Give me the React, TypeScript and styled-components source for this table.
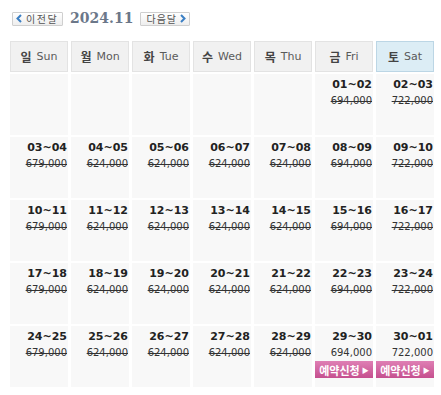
import React from 'react';
import styled, { createGlobalStyle } from 'styled-components';

const GlobalStyle = createGlobalStyle`
  body {
    margin: 0;
    background: #ffffff;
    font-family: 'DejaVu Sans', 'Noto Sans CJK KR', sans-serif;
  }
`;

const Page = styled.div`
  padding: 12px 0 0 10px;
  width: 424px;
`;

const Nav = styled.div`
  display: flex;
  align-items: center;
  height: 13px;
  padding-left: 2px;
`;

const NavButton = styled.button`
  display: flex;
  flex-shrink: 0;
  align-items: center;
  gap: 4px;
  height: 14px;
  padding: 0 4px 0 3px;
  border: 1px solid #cfcfcf;
  border-radius: 1px;
  background: linear-gradient(#ffffff, #eeeeee);
  color: #555;
  font-family: 'Noto Sans CJK KR', sans-serif;
  font-size: 10px;
  letter-spacing: 1.5px;
  line-height: 12px;
  white-space: nowrap;
  cursor: pointer;
`;

const NextButton = styled(NavButton)`
  padding: 0 3px 0 5px;
  gap: 3px;
  letter-spacing: 1px;
`;

const MonthTitle = styled.span`
  margin: 0 7px 0 7px;
  font-family: 'DejaVu Serif', serif;
  font-weight: bold;
  font-size: 14px;
  line-height: 13px;
  color: #6b7789;
  white-space: nowrap;
`;

const Grid = styled.div`
  display: grid;
  grid-template-columns: repeat(7, 1fr);
  grid-template-rows: 31px repeat(5, 61px);
  column-gap: 3px;
  row-gap: 2px;
  margin-top: 16px;
`;

const HeadCell = styled.div<{ $sat?: boolean }>`
  display: flex;
  align-items: center;
  justify-content: center;
  gap: 5px;
  border: 1px solid ${({ $sat }) => ($sat ? '#bcd6e5' : '#e3e3e3')};
  background: ${({ $sat }) => ($sat ? '#dcedf5' : '#f1f1f1')};
  color: #5a5a5a;
  font-size: 12px;
`;

const HeadKo = styled.span`
  font-family: 'Noto Sans CJK KR', sans-serif;
  font-weight: bold;
  color: #444;
`;

const HeadEn = styled.span`
  font-family: 'DejaVu Sans', sans-serif;
  font-size: 11px;
`;

const DayCell = styled.div`
  display: flex;
  flex-direction: column;
  align-items: flex-end;
  padding: 4px 1px 0 0;
  background: #f8f8f8;
`;

const Range = styled.div`
  font-weight: bold;
  font-size: 11px;
  line-height: 14px;
  color: #222;
`;

const Price = styled.div<{ $closed: boolean }>`
  margin-top: 2px;
  font-size: 10px;
  line-height: 14px;
  color: #333;
  text-decoration: ${({ $closed }) => ($closed ? 'line-through' : 'none')};
`;

const BookButton = styled.button`
  align-self: stretch;
  display: flex;
  align-items: center;
  justify-content: center;
  gap: 2px;
  height: 17px;
  margin: 1px -1px 0 0;
  padding: 0;
  border: none;
  background: linear-gradient(#df7fb4, #c5508f);
  color: #fff;
  font-family: 'Noto Sans CJK KR', sans-serif;
  font-weight: bold;
  font-size: 11px;
  white-space: nowrap;
  cursor: pointer;
`;

const Arrow = styled.span`
  font-size: 7px;
`;

const Chevron = styled.svg`
  display: block;
  flex-shrink: 0;
`;

const ChevronIcon = ({ dir }: { dir: 'left' | 'right' }) => (
  <Chevron width="6" height="9" viewBox="0 0 6 9">
    <path
      d={dir === 'left' ? 'M5 1 L1.5 4.5 L5 8' : 'M1 1 L4.5 4.5 L1 8'}
      fill="none"
      stroke="#3b7fc4"
      strokeWidth="2"
    />
  </Chevron>
);

const heads = [
  ['일', 'Sun'],
  ['월', 'Mon'],
  ['화', 'Tue'],
  ['수', 'Wed'],
  ['목', 'Thu'],
  ['금', 'Fri'],
  ['토', 'Sat']
];

const prices = ['679,000', '624,000', '624,000', '624,000', '624,000', '694,000', '722,000'];
const pad = (n: number) => String(n).padStart(2, '0');

interface Day {
  from: number;
  to: number;
  price: string;
  open: boolean;
}

const cells: (Day | null)[] = [null, null, null, null, null];
for (let d = 1; d <= 30; d++) {
  const col = (d + 4) % 7;
  cells.push({
    from: d,
    to: d === 30 ? 1 : d + 1,
    price: prices[col],
    open: d >= 29
  });
}

export default function App() {
  return (
    <Page>
      <GlobalStyle />
      <Nav>
        <NavButton>
          <ChevronIcon dir="left" />
          이전달
        </NavButton>
        <MonthTitle>2024.11</MonthTitle>
        <NextButton>
          다음달
          <ChevronIcon dir="right" />
        </NextButton>
      </Nav>
      <Grid>
        {heads.map(([ko, en]) => (
          <HeadCell key={en} $sat={en === 'Sat'}>
            <HeadKo>{ko}</HeadKo>
            <HeadEn>{en}</HeadEn>
          </HeadCell>
        ))}
        {cells.map((day, i) =>
          day ? (
            <DayCell key={i}>
              <Range>
                {pad(day.from)}~{pad(day.to)}
              </Range>
              <Price $closed={!day.open}>{day.price}</Price>
              {day.open && (
                <BookButton>
                  예약신청<Arrow>▶</Arrow>
                </BookButton>
              )}
            </DayCell>
          ) : (
            <DayCell key={i} />
          )
        )}
      </Grid>
    </Page>
  );
}
